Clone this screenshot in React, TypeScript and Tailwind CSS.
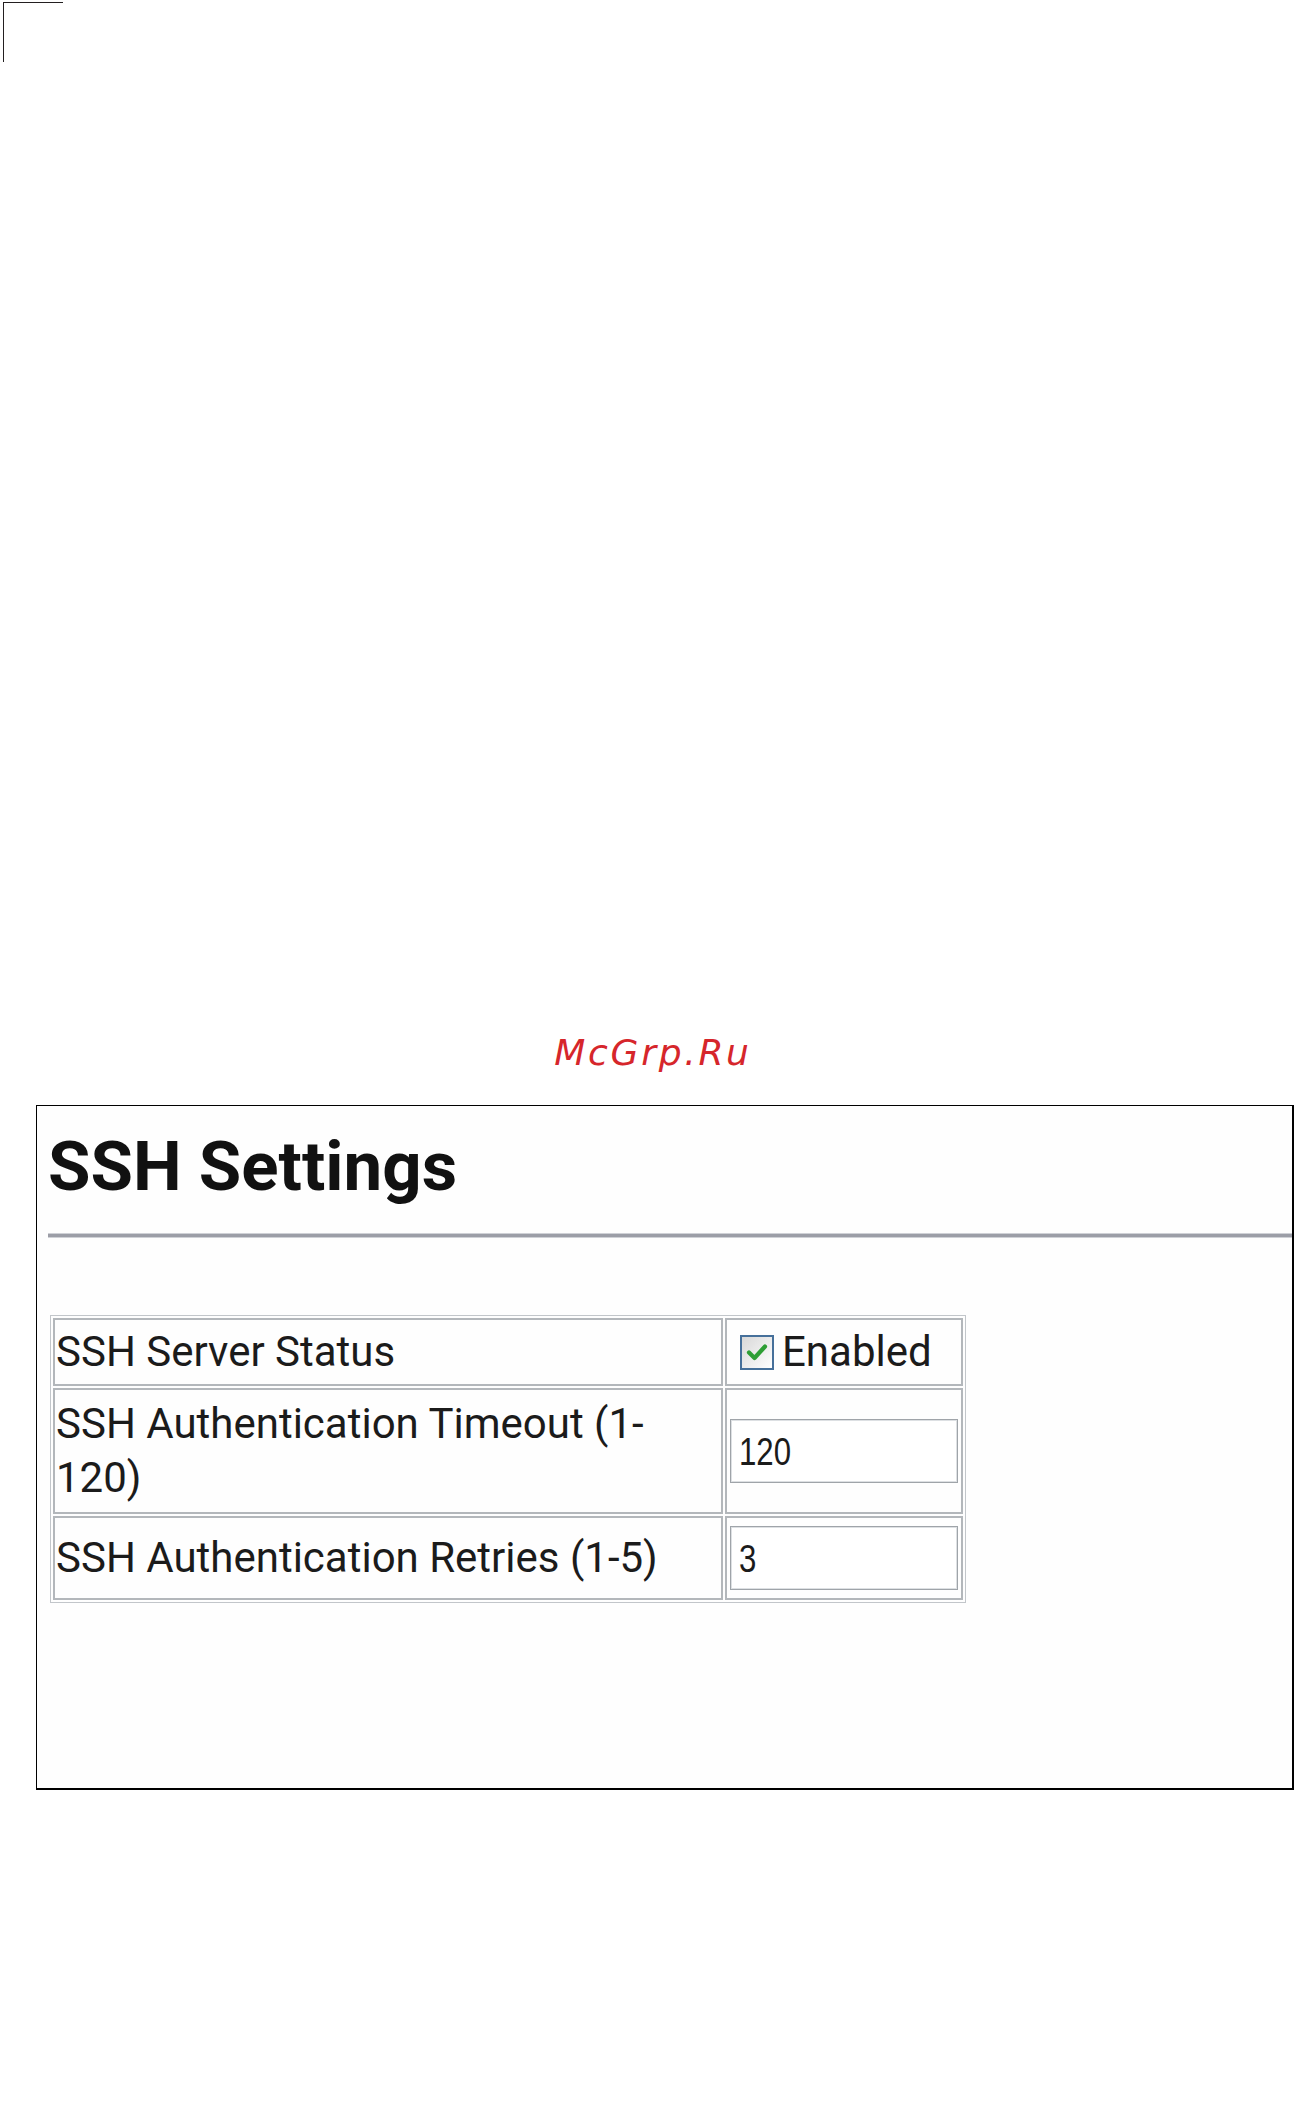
function FakeInput({ value }: { value: string }) {
  return (
    <div className="flex h-[64px] w-[228px] items-center overflow-hidden border border-[#9fa4a9] bg-white px-[8px] shadow-[inset_0_0_0_1px_#dde0e3]">
      <span className="origin-left scale-x-[0.8] font-['Liberation_Sans',sans-serif] text-[39px] leading-none text-[#1b1b1b]">
        {value}
      </span>
    </div>
  );
}

export default function App() {
  return (
    <div className="min-h-[2107px] w-[1296px] bg-white text-[#1b1b1b]">
      <div className="ml-[3px] mt-[2px] h-[60px] w-[60px] border-l border-t border-[#231f20]" />
      <div className="mt-[973px] h-[36px] pl-[10px] text-center font-['DejaVu_Sans',sans-serif] text-[36px] italic leading-[36px] tracking-[2.7px] text-[#d6262b]">
        McGrp.Ru
      </div>
      <div className="ml-[36px] mt-[34px] h-[685px] w-[1258px] border-b-2 border-l border-r-2 border-t border-black bg-[#fefefe] pl-[11px]">
        <h1 className="pt-[28px] font-['Roboto',sans-serif] text-[69px] font-bold leading-[66px] text-[#111]">
          SSH Settings
        </h1>
        <div className="mt-[33px] h-[5px] border-y border-[#cfd1d6] bg-[#9c9ea7]" />
        <table className="ml-[2px] mt-[77px] w-[916px] table-fixed border-separate border-spacing-[2px] border border-[#c2c6ca] font-['Roboto',sans-serif] text-[42px] leading-[54px]">
          <colgroup>
            <col className="w-[670px]" />
            <col className="w-[238px]" />
          </colgroup>
          <tbody>
            <tr>
              <td className="border-2 border-[#b3b7bb] pl-[1px] pr-[3px] py-[5px] align-middle whitespace-nowrap">
                SSH Server Status
              </td>
              <td className="border-2 border-[#b3b7bb] px-[3px] py-[5px] align-middle">
                <div className="flex items-center">
                  <span className="ml-[10px] mr-[8px] inline-flex h-[35px] w-[34px] items-center justify-center border-2 border-[#46709a] bg-gradient-to-br from-[#d8d8d8] to-[#ffffff]">
                    <svg width="22" height="20" viewBox="0 0 22 20">
                      <path d="M3 10.5 L8.5 16 L19 4.5" fill="none" stroke="#2e9e35" strokeWidth="4.2" strokeLinecap="round" strokeLinejoin="round" />
                    </svg>
                  </span>
                  <span>Enabled</span>
                </div>
              </td>
            </tr>
            <tr>
              <td className="border-2 border-[#b3b7bb] pl-[1px] pr-[3px] py-[7px] align-middle">
                SSH Authentication Timeout (1-
                <br />
                120)
              </td>
              <td className="border-2 border-[#b3b7bb] px-[3px] py-[7px] align-middle">
                <FakeInput value="120" />
              </td>
            </tr>
            <tr>
              <td className="border-2 border-[#b3b7bb] pl-[1px] pr-[3px] py-[5px] align-middle whitespace-nowrap">
                SSH Authentication Retries (1-5)
              </td>
              <td className="border-2 border-[#b3b7bb] px-[3px] py-[8px] align-middle">
                <FakeInput value="3" />
              </td>
            </tr>
          </tbody>
        </table>
      </div>
    </div>
  );
}
